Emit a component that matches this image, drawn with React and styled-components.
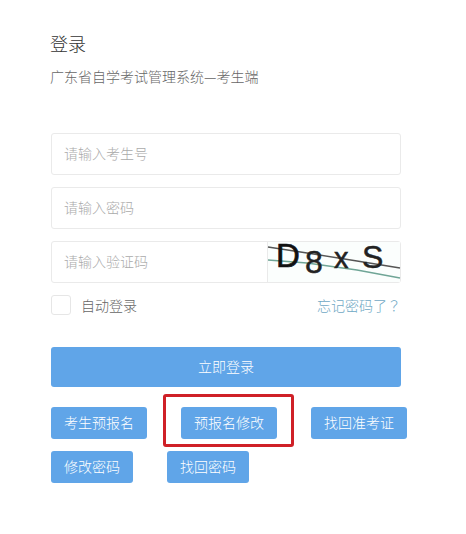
import React from "react";
import styled, { createGlobalStyle } from "styled-components";

const GlobalStyle = createGlobalStyle`
  html, body {
    margin: 0;
    padding: 0;
    background: #fff;
  }
  * {
    box-sizing: border-box;
  }
`;

const Page = styled.div`
  width: 466px;
  height: 534px;
  padding: 31px 0 0 51px;
  font-family: "Noto Sans CJK SC", "Liberation Sans", sans-serif;
  font-weight: 300;
  overflow: hidden;
`;

const Title = styled.h1`
  margin: 0 0 0 -1px;
  font-size: 18px;
  line-height: 24px;
  font-weight: 300;
  color: #333;
`;

const SubTitle = styled.p`
  margin: 10px 0 0 -1px;
  font-size: 14px;
  line-height: 22px;
  color: #666;
`;

const Form = styled.form`
  width: 350px;
  margin-top: 46px;
  display: flex;
  flex-direction: column;
  gap: 12px;
`;

const Field = styled.div`
  height: 42px;
  padding-left: 12px;
  display: flex;
  align-items: center;
  border: 1px solid #eaeaea;
  border-radius: 3px;
  font-size: 14px;
  color: #aaa;
`;

const FieldInput = styled.input`
  flex: 1;
  min-width: 0;
  height: 100%;
  padding: 0 0 2px;
  border: 0;
  outline: 0;
  background: transparent;
  font: inherit;
  &::placeholder {
    color: #aaa;
    opacity: 1;
  }
`;

const Captcha = styled.svg`
  width: 133px;
  height: 40px;
  flex: none;
  overflow: visible;
  border-left: 1px solid #eaeaea;
`;

const OptionRow = styled.div`
  height: 20px;
  display: flex;
  align-items: center;
  justify-content: space-between;
`;

const Remember = styled.label`
  display: flex;
  align-items: center;
  gap: 10px;
  font-size: 14px;
  color: #666;
`;

const CheckBox = styled.span`
  width: 20px;
  height: 20px;
  border: 1px solid #e6e6e6;
  border-radius: 3px;
`;

const ForgotLink = styled.a`
  font-family: "Noto Sans CJK TC", "Liberation Sans", sans-serif;
  font-size: 14px;
  color: #6fa8c4;
`;

const LoginButton = styled.button`
  width: 350px;
  height: 40px;
  margin-top: 32px;
  padding: 0 0 2px;
  display: block;
  border: 0;
  border-radius: 3px;
  background: #60a5e8;
  color: #fff;
  font: inherit;
  font-size: 14px;
`;

const ActionGroup = styled.div`
  position: relative;
  width: 370px;
  margin-top: 20px;
  display: flex;
  flex-wrap: wrap;
  gap: 12px 34px;
`;

const ActionButton = styled.button`
  height: 32px;
  width: ${(p) => p.$width}px;
  padding: 0 0 2px;
  border: 0;
  border-radius: 3px;
  background: #60a5e8;
  color: #fff;
  font: inherit;
  font-size: 14px;
`;

const Highlight = styled.div`
  position: absolute;
  left: 112px;
  top: -13px;
  width: 131px;
  height: 53px;
  border: 3px solid #cf2027;
  border-radius: 3px;
  pointer-events: none;
`;

export default function App() {
  return (
    <Page>
      <GlobalStyle />
      <Title>登录</Title>
      <SubTitle>广东省自学考试管理系统—考生端</SubTitle>
      <Form onSubmit={(e) => e.preventDefault()}>
        <Field>
          <FieldInput placeholder="请输入考生号" />
        </Field>
        <Field>
          <FieldInput placeholder="请输入密码" />
        </Field>
        <Field>
          <FieldInput placeholder="请输入验证码" />
          <Captcha viewBox="1 1 132 40">
            <rect x="1" y="1" width="132" height="40" fill="#fbfefd" />
            <path d="M1 6 L40 12 L90 20 L133 27" stroke="#555" strokeWidth="1.4" fill="none" />
            <path d="M1 19 L40 22 L90 29 L133 37" stroke="#6fa596" strokeWidth="1.4" fill="none" />
            <text x="9" y="26" fontFamily="Liberation Sans" fontSize="33" fill="#111" stroke="#111" strokeWidth="0.7">D</text>
            <text x="38" y="32" fontFamily="Liberation Sans" fontSize="32" fill="#222" stroke="#222" strokeWidth="0.5">8</text>
            <text x="67" y="27" fontFamily="Liberation Sans" fontSize="29" fill="#222" stroke="#222" strokeWidth="0.5">x</text>
            <text x="95" y="27" fontFamily="Liberation Sans" fontSize="32" fill="#222" stroke="#222" strokeWidth="0.5">S</text>
          </Captcha>
        </Field>
        <OptionRow>
          <Remember>
            <CheckBox />
            自动登录
          </Remember>
          <ForgotLink>忘记密码了？</ForgotLink>
        </OptionRow>
      </Form>
      <LoginButton>立即登录</LoginButton>
      <ActionGroup>
        <ActionButton $width={96}>考生预报名</ActionButton>
        <ActionButton $width={96}>预报名修改</ActionButton>
        <ActionButton $width={96}>找回准考证</ActionButton>
        <ActionButton $width={82}>修改密码</ActionButton>
        <ActionButton $width={82}>找回密码</ActionButton>
        <Highlight />
      </ActionGroup>
    </Page>
  );
}
